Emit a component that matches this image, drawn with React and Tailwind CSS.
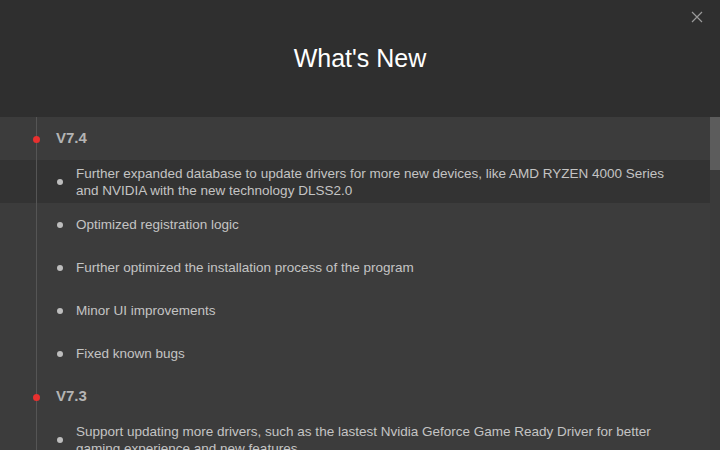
import React from 'react'

const releases = [
  {
    version: 'V7.4',
    items: [
      'Further expanded database to update drivers for more new devices, like AMD RYZEN 4000 Series and NVIDIA with the new technology DLSS2.0',
      'Optimized registration logic',
      'Further optimized the installation process of the program',
      'Minor UI improvements',
      'Fixed known bugs',
    ],
  },
  {
    version: 'V7.3',
    items: [
      'Support updating more drivers, such as the lastest Nvidia Geforce Game Ready Driver for better gaming experience and new features',
      'Optimized registration logic',
    ],
  },
]

export default function App() {
  return (
    <div
      className="w-[720px] h-[450px] overflow-hidden flex flex-col bg-[#3c3c3c]"
      style={{ fontFamily: '"Liberation Sans", sans-serif' }}
    >
      {/* header */}
      <div className="relative h-[117px] shrink-0 bg-[#2f2f2f] flex items-center justify-center">
        <h1 className="text-[25px] text-white leading-none">What's New</h1>
        <button className="absolute right-[17px] top-[11px] w-[12px] h-[12px] text-[#9a9a9a]">
          <svg viewBox="0 0 12 12" width="12" height="12" fill="none" stroke="currentColor" strokeWidth="1.2">
            <path d="M1 1L11 11M11 1L1 11" />
          </svg>
        </button>
      </div>

      {/* body */}
      <div className="flex flex-1 min-h-0">
        <div className="relative flex-1 min-w-0">
          {releases.map((r) => (
            <div key={r.version}>
              <div className="relative h-[43px] flex items-center pl-[56px]">
                <span className="absolute left-[33px] top-[19px] w-[7px] h-[7px] rounded-full bg-[#e8302f] z-20" />
                <span className="text-[15px] font-bold text-[#b4b4b4]">{r.version}</span>
              </div>
              {r.items.map((it, i) => (
                <div
                  key={i}
                  className={`relative min-h-[43px] flex items-center pl-[76px] pr-[20px] py-[4px] ${
                    r.version === 'V7.4' && i === 0 ? 'bg-[#333333]' : ''
                  }`}
                >
                  <span className="absolute left-[57px] top-1/2 -translate-y-1/2 w-[6px] h-[6px] rounded-full bg-[#bdbdbd]" />
                  <span className="text-[13.5px] leading-[17px] text-[#c4c4c4]">{it}</span>
                </div>
              ))}
            </div>
          ))}
          <div className="absolute left-[36px] top-0 bottom-0 w-px bg-[#555555] z-10" />
        </div>
        {/* scrollbar */}
        <div className="w-[10px] shrink-0 bg-[#3a3a3a]">
          <div className="h-[53px] bg-[#5c5c5c]" />
        </div>
      </div>
    </div>
  )
}
